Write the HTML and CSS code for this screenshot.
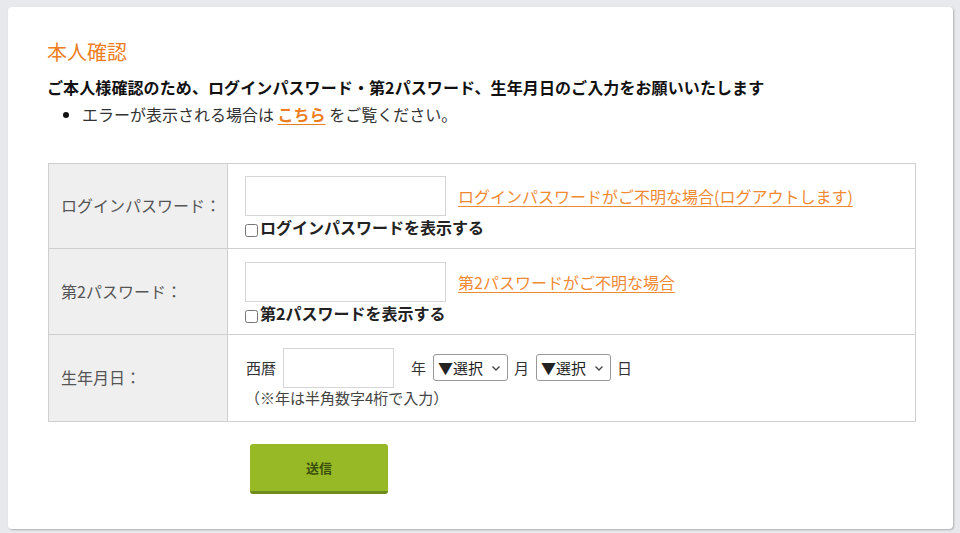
FILE: index.html
```html
<!DOCTYPE html>
<html lang="ja">
<head>
<meta charset="utf-8">
<title>本人確認</title>
<link rel="stylesheet" href="styles.css">
</head>
<body>
<div class="card">
  <h1 class="title">本人確認</h1>
  <p class="lead">ご本人様確認のため、ログインパスワード・第2パスワード、生年月日のご入力をお願いいたします</p>
  <ul class="notes">
    <li>エラーが表示される場合は <a href="#" class="link strong">こちら</a> をご覧ください。</li>
  </ul>
  <table class="form">
    <tr class="r1">
      <th>ログインパスワード：</th>
      <td>
        <div class="line"><input type="password" class="pw"><a href="#" class="link">ログインパスワードがご不明な場合(ログアウトします)</a></div>
        <label class="show"><input type="checkbox">ログインパスワードを表示する</label>
      </td>
    </tr>
    <tr class="r2">
      <th>第2パスワード：</th>
      <td>
        <div class="line"><input type="password" class="pw"><a href="#" class="link">第2パスワードがご不明な場合</a></div>
        <label class="show"><input type="checkbox">第2パスワードを表示する</label>
      </td>
    </tr>
    <tr class="r3">
      <th>生年月日：</th>
      <td>
        <div class="line birth">
          <span class="era">西暦</span><input type="text" class="year"><span class="u-year">年</span>
          <span class="sel"><select><option>▼選択</option></select><svg class="chev" width="10" height="6" viewBox="0 0 10 6"><path d="M1.5 1.5l3.5 3.5 3.5-3.5" fill="none" stroke="#444" stroke-width="1.3"/></svg></span><span class="u">月</span>
          <span class="sel"><select><option>▼選択</option></select><svg class="chev" width="10" height="6" viewBox="0 0 10 6"><path d="M1.5 1.5l3.5 3.5 3.5-3.5" fill="none" stroke="#444" stroke-width="1.3"/></svg></span><span class="u">日</span>
        </div>
        <div class="hint">（※年は半角数字4桁で入力）</div>
      </td>
    </tr>
  </table>
  <div class="actions"><button type="button" class="submit">送信</button></div>
</div>
</body>
</html>
```
FILE: styles.css
```css
html, body {
  margin: 0;
  padding: 0;
}
body {
  background: #e8e9ed;
  font-family: "Noto Sans CJK JP", "Noto Sans", sans-serif;
  color: #333;
  padding: 7px 7px 4px 8px;
  height: 533px;
  box-sizing: border-box;
}
.card {
  background: #fff;
  border-radius: 4px;
  box-shadow: 1px 1px 2px rgba(0,0,0,0.25);
  height: 522px;
  box-sizing: border-box;
  padding: 30px 38px 0 39px;
}
.title {
  margin: 0;
  font-size: 20px;
  font-weight: normal;
  color: #ee7d20;
  line-height: 30px;
}
.lead {
  margin: 8px 0 0;
  font-size: 16px;
  font-weight: bold;
  line-height: 24px;
  color: #111;
  letter-spacing: 0.1px;
}
.notes {
  margin: 3px 0 0;
  padding-left: 35px;
  font-size: 16px;
  line-height: 24px;
  color: #333;
}
.notes li::marker {
  color: #111;
}
.link {
  color: #ef8a32;
  text-decoration: underline;
  text-underline-offset: 3px;
}
.link.strong {
  font-weight: bold;
  color: #ee7d20;
}
.form {
  margin-top: 37px;
  width: 868px;
  margin-left: 1px;
  border-collapse: collapse;
  font-size: 16px;
}
.form th, .form td {
  border: 1px solid #cfcfcf;
  vertical-align: middle;
}
.form th {
  width: 179px;
  background: #efefef;
  font-weight: normal;
  text-align: left;
  color: #555;
  padding: 0 0 2px 12px;
  border-right: 1px dotted #bbb;
  box-sizing: border-box;
}
.form td {
  padding: 0 0 0 17px;
  color: #333;
}
.r1 { height: 84px; }
.r2 { height: 86px; }
.r3 { height: 87px; }
.line {
  display: flex;
  align-items: center;
}
.pw {
  width: 201px;
  height: 40px;
  box-sizing: border-box;
  border: 1px solid #d6d6d6;
  border-radius: 0;
  margin: 0 12px 0 0;
  padding: 0;
}
.show {
  display: flex;
  align-items: flex-end;
  font-weight: bold;
  color: #222;
  line-height: 22px;
  margin-top: 0;
}
.show input {
  width: 13px;
  height: 13px;
  margin: 0 2px 1px 0;
}
.r1 td, .r2 td {
  padding-top: 12px;
  padding-bottom: 10px;
}
.r3 td {
  padding-top: 0;
  padding-bottom: 0;
}
.birth {
  font-size: 15px;
}
.era {
  margin-left: 1px;
  margin-right: 7px;
}
.year {
  width: 111px;
  height: 40px;
  box-sizing: border-box;
  border: 1px solid #d6d6d6;
  margin: 0 17px 0 0;
  padding: 0;
}
.u-year { margin-right: 6px; }
.u { margin: 0 6px; }
.sel {
  position: relative;
  display: inline-block;
  margin-left: 1px;
}
.sel select {
  appearance: none;
  -webkit-appearance: none;
  height: 27px;
  width: 75px;
  border: 1px solid #999;
  border-radius: 3px;
  background: #fff;
  font-family: "Noto Sans CJK JP", sans-serif;
  font-size: 15px;
  color: #222;
  padding: 0 0 0 4px;
  margin: 0;
  display: block;
  line-height: 25px;
}
.sel .chev {
  position: absolute;
  right: 7px;
  top: 11px;
  pointer-events: none;
}
.hint {
  font-size: 15px;
  line-height: 22px;
  color: #444;
  margin-top: -1px;
}
.actions {
  padding-left: 203px;
  margin-top: 22px;
}
.submit {
  width: 138px;
  height: 50px;
  border: none;
  border-bottom: 3px solid #6e8b1d;
  border-radius: 3px;
  background: #97b926;
  color: #3b500c;
  font-family: "Noto Sans CJK JP", sans-serif;
  font-weight: bold;
  font-size: 13px;
  padding: 0;
}
```
